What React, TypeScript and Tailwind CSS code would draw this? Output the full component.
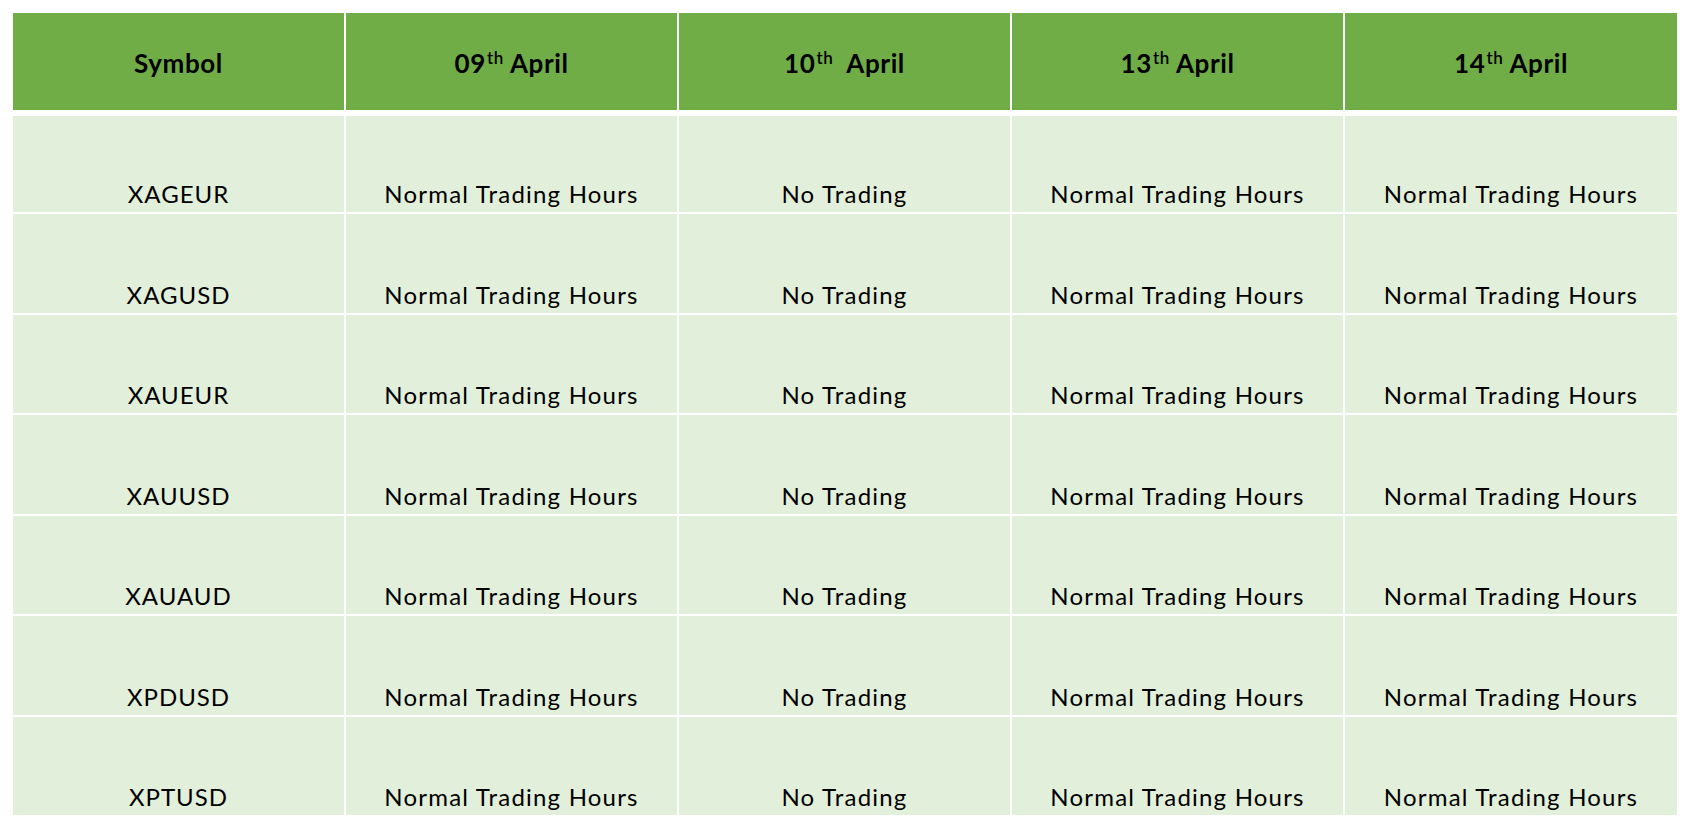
import React from 'react';

const dates = [
  { day: '09', gap: false },
  { day: '10', gap: true },
  { day: '13', gap: false },
  { day: '14', gap: false },
];

const symbols = ['XAGEUR', 'XAGUSD', 'XAUEUR', 'XAUUSD', 'XAUAUD', 'XPDUSD', 'XPTUSD'];

// row heights measured off the slide
const rowHeights = ['h-[96px]', 'h-[99px]', 'h-[98px]', 'h-[99px]', 'h-[98px]', 'h-[99px]', 'h-[98px]'];

const cols = 'grid grid-cols-[331px_331px_331px_331px_332px] gap-x-[2px]';

const App: React.FC = () => {
  return (
    <div
      className="w-[1690px] h-[829px] bg-white pt-[13px] pl-[13px] text-black"
      style={{ fontFamily: 'Lato, "Open Sans", sans-serif' }}
    >
      {/* 表头 */}
      <div className={`${cols} h-[97px]`}>
        <div className="bg-[#70ad47] flex items-center justify-center pt-[4px] text-[26px] font-bold tracking-[0.6px]">
          Symbol
        </div>
        {dates.map((d) => (
          <div
            key={d.day}
            className="bg-[#70ad47] flex items-center justify-center pt-[4px] text-[26px] font-bold tracking-[0.6px]"
          >
            <span>
              {d.day}
              <sup className="text-[17px] font-semibold relative -top-[9px] ml-[1px]">th</sup>
              {d.gap ? '\u00a0 ' : ' '}
              April
            </span>
          </div>
        ))}
      </div>

      {/* 数据行 */}
      <div className="mt-[6px] flex flex-col gap-y-[2px]">
        {symbols.map((s, i) => (
          <div key={s} className={`${cols} ${rowHeights[i]}`}>
            <div className="bg-[#e2efda] flex items-end justify-center text-[24px] tracking-[1px]">
              {s}
            </div>
            {dates.map((d, j) => (
              <div
                key={d.day}
                className="bg-[#e2efda] flex items-end justify-center text-[24px] tracking-[1.2px]"
              >
                {j === 1 ? 'No Trading' : 'Normal Trading Hours'}
              </div>
            ))}
          </div>
        ))}
      </div>
    </div>
  );
};

export default App;
